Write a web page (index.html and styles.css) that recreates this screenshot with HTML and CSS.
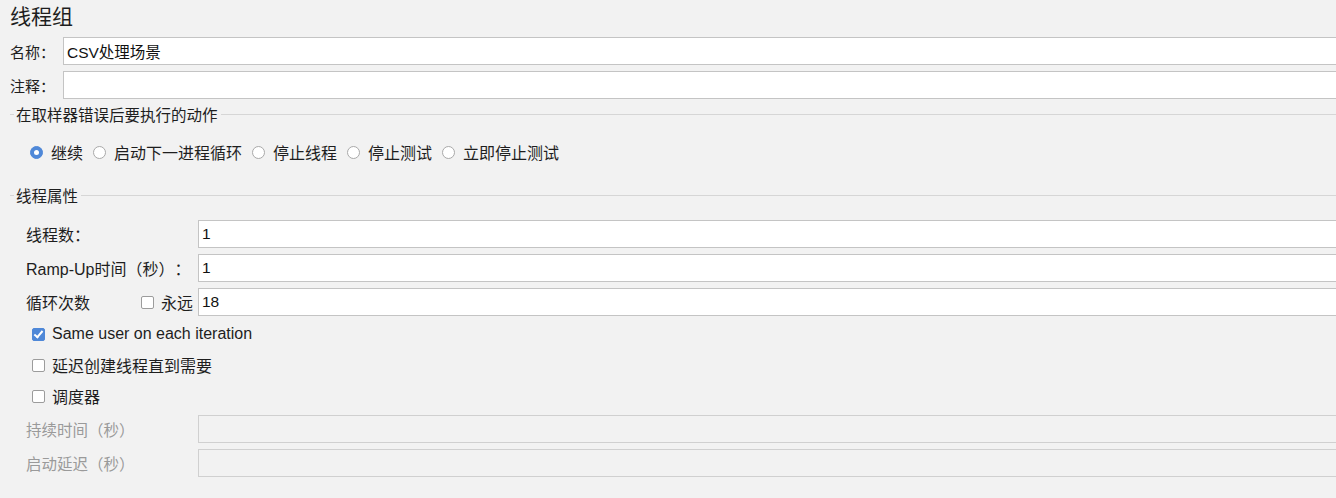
FILE: index.html
```html
<!DOCTYPE html>
<html lang="zh-CN">
<head>
    <meta charset="UTF-8">
    <title>线程组</title>
    <link rel="stylesheet" href="styles.css">
</head>
<body>
    <div class="panel">
        <h1 class="title">线程组</h1>

        <div class="field">
            <label class="field-label">名称<span class="colon">：</span></label>
            <input class="text-input" type="text" value="CSV处理场景">
        </div>
        <div class="field">
            <label class="field-label">注释<span class="colon">：</span></label>
            <input class="text-input" type="text" value="">
        </div>

        <div class="legend legend-error">在取样器错误后要执行的动作</div>
        <div class="radio-row">
            <span class="option"><span class="radio checked"></span>继续</span>
            <span class="option"><span class="radio"></span>启动下一进程循环</span>
            <span class="option"><span class="radio"></span>停止线程</span>
            <span class="option"><span class="radio"></span>停止测试</span>
            <span class="option"><span class="radio"></span>立即停止测试</span>
        </div>

        <div class="legend legend-props">线程属性</div>
        <div class="props">
            <div class="prop">
                <label class="prop-label">线程数<span class="colon">：</span></label>
                <input class="text-input" type="text" value="1">
            </div>
            <div class="prop">
                <label class="prop-label">Ramp-Up时间（秒）<span class="colon">：</span></label>
                <input class="text-input" type="text" value="1">
            </div>
            <div class="prop">
                <label class="prop-label loop-label">
                    <span>循环次数</span>
                    <span class="forever"><span class="checkbox"></span>永远</span>
                </label>
                <input class="text-input" type="text" value="18">
            </div>

            <div class="check-row first"><span class="checkbox checked"></span>Same user on each iteration</div>
            <div class="check-row"><span class="checkbox"></span>延迟创建线程直到需要</div>
            <div class="check-row"><span class="checkbox"></span>调度器</div>

            <div class="prop disabled first-disabled">
                <label class="prop-label">持续时间（秒）</label>
                <input class="text-input" type="text" value="" disabled>
            </div>
            <div class="prop disabled">
                <label class="prop-label">启动延迟（秒）</label>
                <input class="text-input" type="text" value="" disabled>
            </div>
        </div>
    </div>
</body>
</html>
```

FILE: styles.css
```css
html, body {
    margin: 0;
    padding: 0;
    overflow: hidden;
}

body {
    font-family: "Liberation Sans", "Noto Sans CJK SC", sans-serif;
    font-size: 16px;
    color: #1e1e1e;
    background-color: #f2f2f2;
    width: 1336px;
    height: 498px;
    text-spacing-trim: space-all;
}

.panel {
    width: 1346px;
}

.title {
    font-size: 21px;
    font-weight: normal;
    line-height: 24px;
    margin: 0;
    padding: 5px 0 0 10px;
    height: 32px;
}

.colon {
    font-family: "Noto Sans CJK JP", sans-serif;
}

.field {
    display: flex;
    align-items: center;
    height: 28px;
    margin-bottom: 6px;
    padding-left: 10px;
}

.field-label {
    width: 53px;
    flex-shrink: 0;
    font-size: 15px;
}

.text-input {
    flex: 1;
    height: 28px;
    box-sizing: border-box;
    border: 1px solid #c4c4c4;
    background: #ffffff;
    font-family: "Liberation Sans", "Noto Sans CJK SC", sans-serif;
    font-size: 15.5px;
    color: #111;
    padding: 0 3px;
    margin: 0;
    outline: none;
}

.text-input:disabled {
    background: #f2f2f2;
    border-color: #d0d0d0;
}

.legend {
    display: flex;
    align-items: center;
    height: 20px;
    margin-left: 10px;
    font-size: 15.5px;
}

.legend::before {
    content: "";
    width: 4px;
    border-top: 1px solid #d6d6d6;
    margin-right: 2px;
}

.legend::after {
    content: "";
    flex: 1;
    border-top: 1px solid #d6d6d6;
    margin-left: 3px;
}

.legend-error {
    margin-top: -1px;
}

.legend-props {
    margin-top: 23px;
}

.radio-row {
    display: flex;
    align-items: center;
    height: 20px;
    margin-top: 18px;
    padding-left: 30px;
}

.option {
    display: flex;
    align-items: center;
    margin-right: 10px;
}

.radio {
    width: 13px;
    height: 13px;
    box-sizing: border-box;
    border-radius: 50%;
    border: 1px solid #a9a9a9;
    background: #ffffff;
    margin-right: 8px;
    position: relative;
}

.radio.checked {
    background: #4f88d8;
    border-color: #4f88d8;
}

.radio.checked::after {
    content: "";
    position: absolute;
    left: 3px;
    top: 3px;
    width: 5px;
    height: 5px;
    border-radius: 50%;
    background: #ffffff;
}

.props {
    margin-top: 15px;
}

.prop {
    display: flex;
    align-items: center;
    height: 28px;
    margin-bottom: 6px;
    padding-left: 26px;
}

.prop-label {
    width: 172px;
    flex-shrink: 0;
    white-space: nowrap;
}

.loop-label {
    display: flex;
    align-items: center;
}

.forever {
    display: flex;
    align-items: center;
    margin-left: 51px;
}

.forever .checkbox {
    margin-right: 7px;
}

.checkbox {
    width: 13px;
    height: 13px;
    box-sizing: border-box;
    border: 1px solid #9c9c9c;
    border-radius: 2px;
    background: #ffffff;
    margin-right: 7px;
    position: relative;
    flex-shrink: 0;
}

.checkbox.checked {
    background: #4f88d8;
    border-color: #4f88d8;
}

.checkbox.checked::after {
    content: "";
    position: absolute;
    left: 3px;
    top: 0px;
    width: 3px;
    height: 7px;
    border: solid #ffffff;
    border-width: 0 2px 2px 0;
    transform: rotate(40deg);
}

.check-row {
    display: flex;
    align-items: center;
    height: 20px;
    margin-top: 11px;
    padding-left: 32px;
}

.check-row.first {
    margin-top: 8px;
}

.disabled .prop-label {
    color: #9a9a9a;
    font-size: 15.5px;
}

.first-disabled {
    margin-top: 9px;
}
```
